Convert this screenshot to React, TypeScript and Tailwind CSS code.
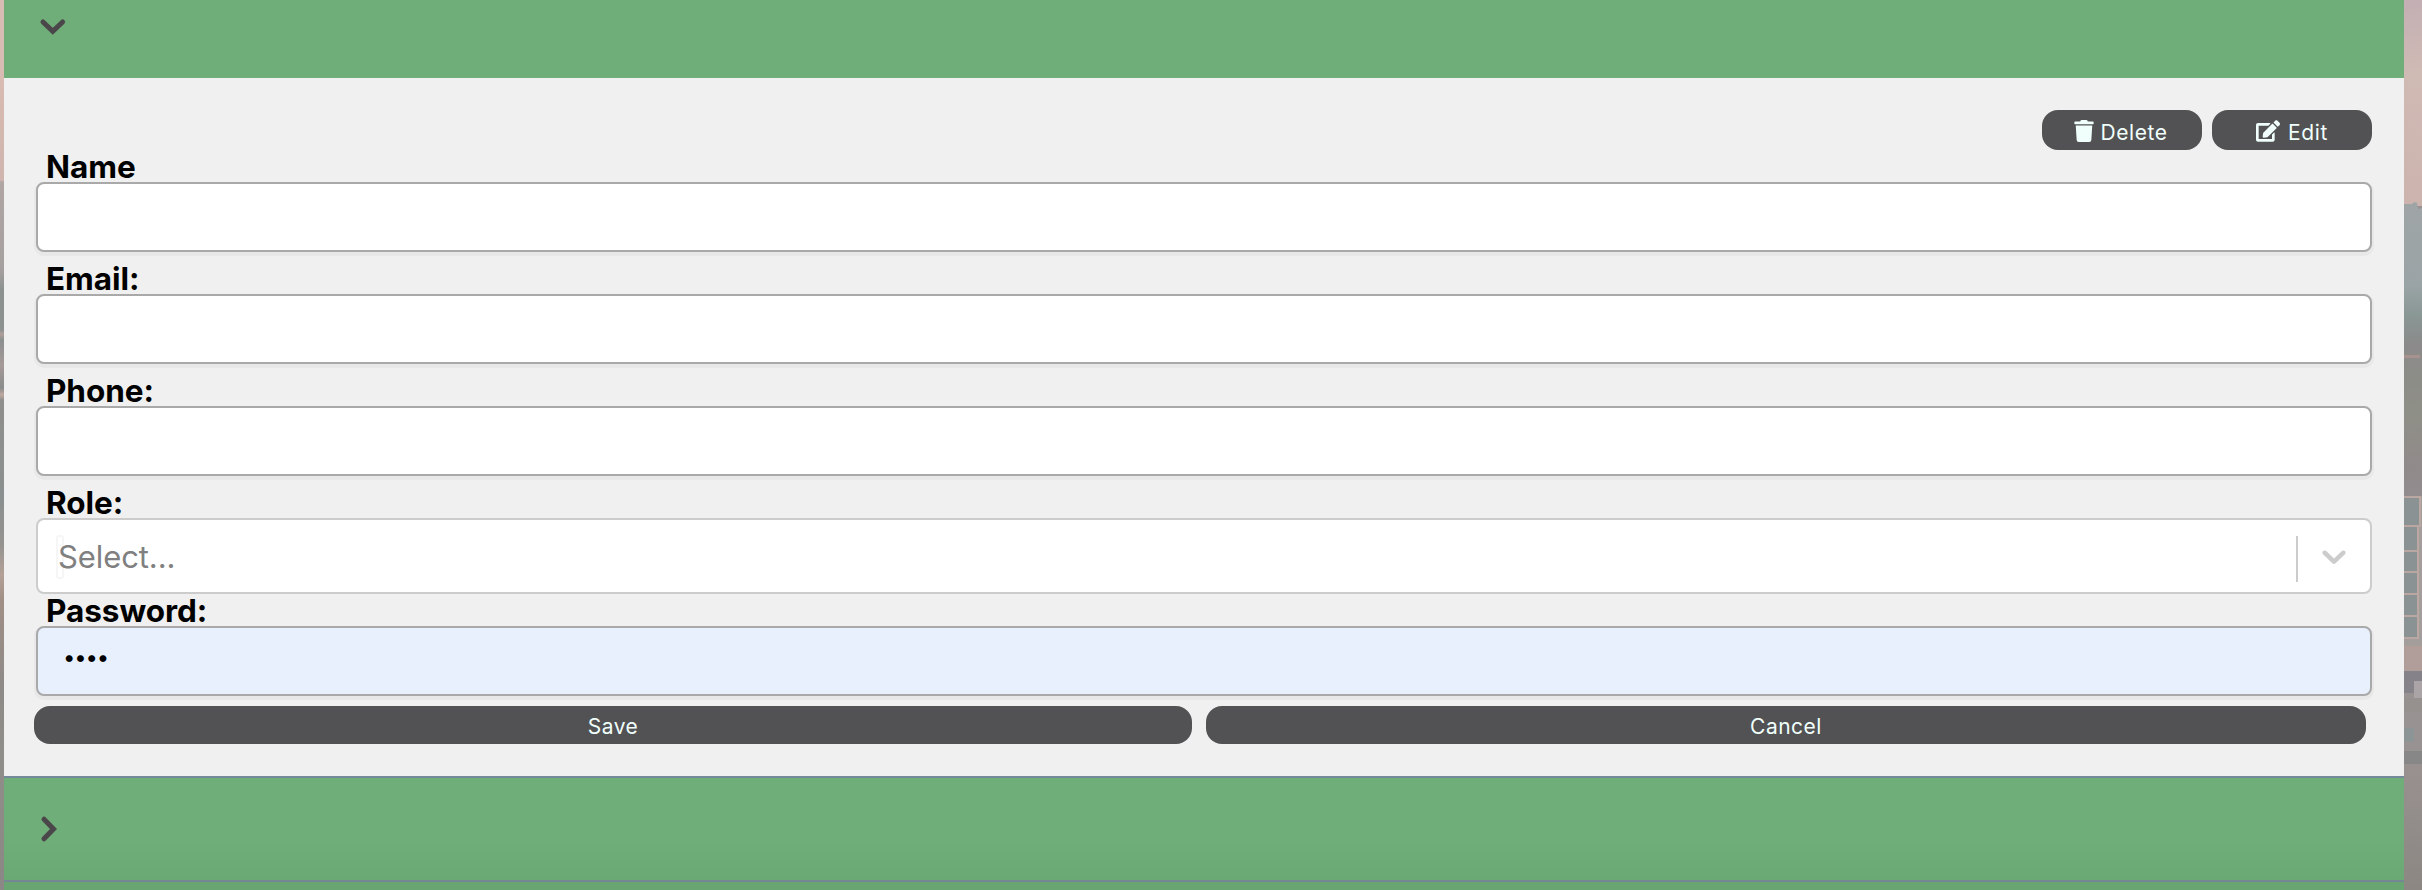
import React from "react";
import { FaTrash, FaEdit } from "react-icons/fa";

const chevronDown =
  "M4.516 7.548c0.436-0.446 1.043-0.481 1.576 0l3.908 3.747 3.908-3.747c0.533-0.481 1.141-0.446 1.574 0 0.436 0.445 0.408 1.197 0 1.615-0.406 0.418-4.695 4.502-4.695 4.502-0.217 0.223-0.502 0.335-0.787 0.335s-0.57-0.112-0.789-0.335c0 0-4.287-4.084-4.695-4.502s-0.436-1.17 0-1.615z";

const labelClass = "block h-8 pl-[10px] text-[31.5px] leading-[33px] font-bold tracking-[-0.05px]";

function Field({ label, type = "text", value = "", fill = "bg-white" }: { label: string; type?: string; value?: string; fill?: string }) {
  return (
    <label className="block">
      <span className={labelClass}>{label}</span>
      <input
        type={type}
        defaultValue={value}
        className={`block h-[70px] w-full rounded-lg border-2 border-[#a9a9a9] px-[25px] pb-[8px] text-[22px] tracking-[-1.1px] shadow-[0_2px_0_2px_#e8e8e8] outline-none ${fill}`}
      />
    </label>
  );
}

export default function App() {
  return (
    <div className="flex h-[890px] w-[2422px] overflow-hidden bg-[#989392] font-['Inter',sans-serif] text-black">
      <div className="w-1 shrink-0 bg-[linear-gradient(#d8bbb2_0px,#d8bbb2_80px,#cfb5ae_180px,#b0a6a4_182px,#a5a09f_270px,#8c9290_290px,#8c9290_330px,#b09f9a_334px,#8c8f8f_340px,#a59a98_365px,#8a8c8c_388px,#c0a8a0_395px,#8f8f8d_400px,#8a908f_500px,#959390_545px,#b3a196_575px,#a08f86_600px,#8e8a87_690px,#908e89_750px,#8a8786_890px)]" />
      <main className="flex w-[2400px] shrink-0 flex-col bg-[#f0f0f0]">
        <header className="h-[78px] shrink-0 bg-[#6fad79] pt-[8px] pl-[30px]">
          <svg viewBox="0 0 38 38" className="size-[38px]">
            <path d="M9 14 L18.8 23.3 L28.6 14" fill="none" stroke="#4a4649" strokeWidth="5" strokeLinecap="round" />
          </svg>
        </header>
        <section className="h-[698px] shrink-0 px-8 pt-8">
          <div className="flex h-10 justify-end gap-[10px] text-[21px] tracking-[0.6px] text-[#f0fffb]">
            <button className="flex w-40 items-center justify-center gap-[5px] rounded-2xl bg-[#525254] pt-[2px] pr-[3px]">
              <FaTrash size={22} />
              <span className="pt-[3px]">Delete</span>
            </button>
            <button className="flex w-40 items-center justify-center gap-[8px] rounded-2xl bg-[#525254] pt-[2px]">
              <FaEdit size={24} />
              <span className="pt-[3px]">Edit</span>
            </button>
          </div>
          <div className="flex flex-col gap-[10px]">
            <Field label="Name" />
            <Field label="Email:" />
            <Field label="Phone:" />
            <div>
              <span className={labelClass}>Role:</span>
              <div className="flex h-[76px] items-center rounded-lg border-2 border-[#cccccc] bg-white">
                <div className="relative grow pt-[2px] pl-5 text-[31px] tracking-[-0.1px] text-[#808080]">
                  <span className="absolute top-[3px] left-[18px] h-11 w-2 rounded-[3px] border-2 border-[#f6f6f6]" />
                  <span className="relative">Select...</span>
                </div>
                <span className="mt-[5px] h-[46px] w-[2px] bg-[#cccccc]" />
                <svg viewBox="0 0 20 20" className="mx-4 size-10" fill="#cccccc"><path d={chevronDown} /></svg>
              </div>
            </div>
            <div className="-mt-[10px]">
              <Field label="Password:" type="password" value="1234" fill="bg-[#e8f0fe]" />
            </div>
          </div>
          <div className="mt-[10px] -ml-[2px] flex h-[38px] gap-[14px] text-[21px] tracking-[0.5px] text-[#f0fffb]">
            <button className="w-[1158px] rounded-2xl bg-[#525254] pt-[3px]">Save</button>
            <button className="w-[1160px] rounded-2xl bg-[#525254] pt-[3px]">Cancel</button>
          </div>
        </section>
        <div className="h-[104px] shrink-0 border-t-2 border-[#74899a] bg-linear-to-b from-[#6fad79] from-60% to-[#6aa874] pt-[31px] pl-[28px]">
          <svg viewBox="0 0 38 38" className="size-[38px]">
            <path d="M12 10.2 L21.5 20 L12 29.8" fill="none" stroke="#4a4649" strokeWidth="5" strokeLinecap="round" />
          </svg>
        </div>
        <div className="h-[10px] shrink-0 border-t-2 border-[#758795] bg-[#68a572]" />
      </main>
      <svg viewBox="0 0 18 890" className="h-[890px] w-[18px] shrink-0">
        <defs>
          <linearGradient id="sky" x1="0" y1="0" x2="0" y2="1">
            <stop offset="0" stopColor="#c3afb4" />
            <stop offset="0.35" stopColor="#d0bab4" />
            <stop offset="1" stopColor="#ccb3ae" />
          </linearGradient>
          <linearGradient id="land" x1="0" y1="0" x2="0" y2="1">
            <stop offset="0" stopColor="#9fa5a7" />
            <stop offset="0.28" stopColor="#9aa3a5" />
            <stop offset="0.38" stopColor="#899795" />
            <stop offset="0.48" stopColor="#8b8a8a" />
            <stop offset="0.7" stopColor="#8e8f86" />
            <stop offset="0.9" stopColor="#918a8b" />
            <stop offset="1" stopColor="#938c8e" />
          </linearGradient>
          <linearGradient id="ground" x1="0" y1="0" x2="0" y2="1">
            <stop offset="0" stopColor="#989190" />
            <stop offset="1" stopColor="#8c8783" />
          </linearGradient>
        </defs>
        <rect width="18" height="206" fill="url(#sky)" />
        <path d="M0 204 L8 204 L10 202 L13 203 L14 209 L18 208 V500 H0Z" fill="url(#land)" />
        <rect y="355" width="16" height="3" fill="#a8928f" />
        <rect y="496" width="18" height="152" fill="#a39e9c" />
        <g fill="#8b9293" stroke="#bba7a2" strokeWidth="2">
          <rect x="-2" y="497" width="18" height="29" />
          <rect x="-2" y="526" width="16" height="25" />
          <rect x="-2" y="551" width="16" height="21" />
          <rect x="-2" y="572" width="16" height="22" />
          <rect x="-2" y="594" width="16" height="22" />
          <rect x="-2" y="616" width="16" height="22" />
        </g>
        <rect y="646" width="18" height="25" fill="#b19e9a" />
        <rect y="671" width="18" height="22" fill="#858389" />
        <rect x="10" y="681" width="8" height="20" fill="#aaa4a6" />
        <rect y="698" width="18" height="14" fill="#96918f" />
        <rect y="712" width="18" height="39" fill="#989392" />
        <rect y="728" width="10" height="14" fill="#8d9495" />
        <rect y="751" width="18" height="13" fill="#868786" />
        <rect y="764" width="18" height="126" fill="url(#ground)" />
      </svg>
    </div>
  );
}
